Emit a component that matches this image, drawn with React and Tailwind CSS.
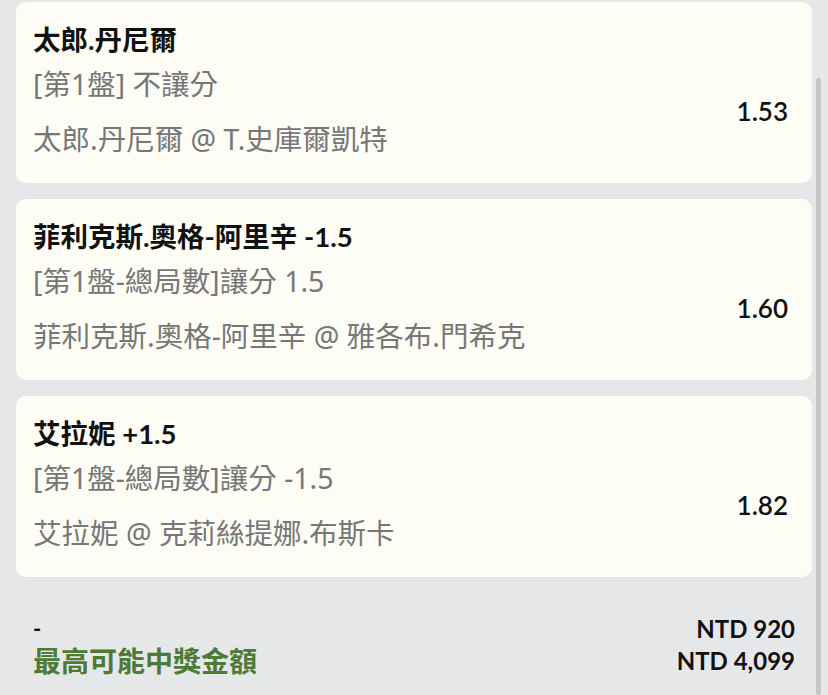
const bets = [
  {
    title: "太郎.丹尼爾",
    market: "[第1盤] 不讓分",
    match: "太郎.丹尼爾 @ T.史庫爾凱特",
    odds: "1.53",
  },
  {
    title: "菲利克斯.奧格-阿里辛 -1.5",
    market: "[第1盤-總局數]讓分 1.5",
    match: "菲利克斯.奧格-阿里辛 @ 雅各布.門希克",
    odds: "1.60",
  },
  {
    title: "艾拉妮 +1.5",
    market: "[第1盤-總局數]讓分 -1.5",
    match: "艾拉妮 @ 克莉絲提娜.布斯卡",
    odds: "1.82",
  },
];

function BetCard({ bet }) {
  return (
    <div className="h-[181px] rounded-[10px] bg-[#fdfdf6] pl-[17px] pr-[24px] pt-[22px]">
      <div className="text-[27.5px] font-bold leading-[32px] text-[#111]">{bet.title}</div>
      <div className="mt-[12px] flex items-center">
        <div className="flex-1 font-['Noto_Sans','Noto_Sans_CJK_TC',sans-serif] text-[28.5px] leading-[32px] text-[#777]">
          <div>{bet.market}</div>
          <div className="mt-[23px]">{bet.match}</div>
        </div>
        <div className="text-[26px] font-semibold text-[#111]">{bet.odds}</div>
      </div>
    </div>
  );
}

export default function App() {
  return (
    <div className="relative h-[695px] overflow-hidden bg-[#e6e7e9] font-['Lato','Noto_Sans_CJK_TC',sans-serif]">
      <div className="w-[796px] ml-[16px] pt-[2px]">
        <div className="flex flex-col gap-[16px]">
          {bets.map((b) => (
            <BetCard key={b.odds} bet={b} />
          ))}
        </div>

        <div className="mt-[36px] flex justify-between px-[17px] leading-[32px]">
          <div>
            <div className="text-[22px] font-bold text-[#111]">-</div>
            <div className="text-[28px] font-bold text-[#4d7a35]">最高可能中獎金額</div>
          </div>
          <div className="text-right text-[24px] font-bold text-[#111]">
            <div>NTD 920</div>
            <div>NTD 4,099</div>
          </div>
        </div>
      </div>

      <div className="absolute right-[7px] top-[78px] bottom-0 w-[5px] rounded-full bg-[#c6c6c8]" />
    </div>
  );
}
